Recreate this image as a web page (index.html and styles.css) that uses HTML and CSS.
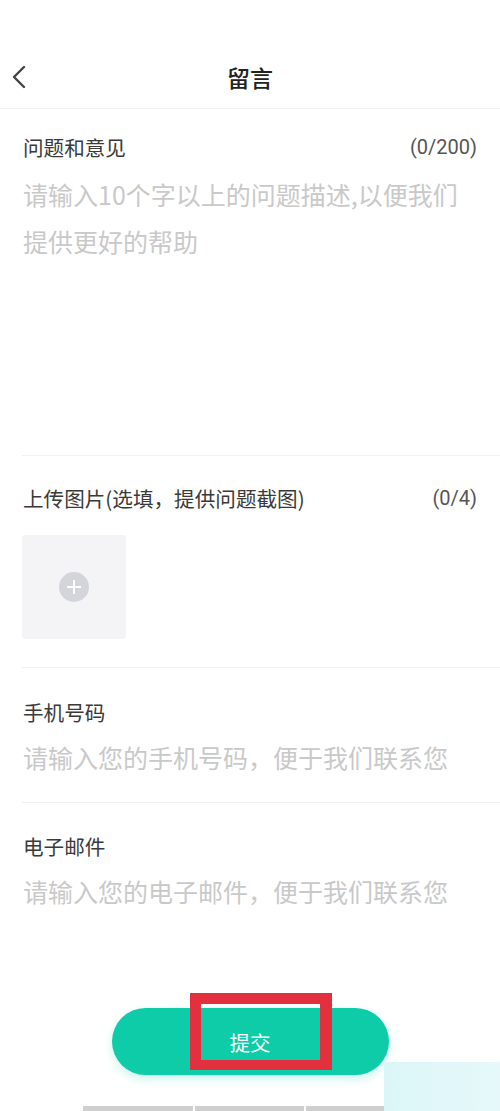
FILE: index.html
```html
<!DOCTYPE html>
<html lang="zh-CN">
<head>
<meta charset="utf-8">
<title>留言</title>
<link rel="stylesheet" href="styles.css">
</head>
<body>
<div class="page">
  <header class="header">
    <div class="header-row">
      <span class="back">
        <svg width="16" height="24" viewBox="0 0 16 24"><path d="M13 2 L3 12 L13 22" fill="none" stroke="#444" stroke-width="2.4" stroke-linecap="round" stroke-linejoin="round"/></svg>
      </span>
      <h1 class="title">留言</h1>
    </div>
  </header>

  <section class="section s-feedback">
    <div class="label-row"><span class="label">问题和意见</span><span class="count">(0/200)</span></div>
    <div class="placeholder area">请输入10个字以上的问题描述,以便我们提供更好的帮助</div>
  </section>

  <section class="section s-upload">
    <div class="label-row"><span class="label">上传图片(选填，提供问题截图)</span><span class="count">(0/4)</span></div>
    <div class="upload-box">
      <span class="plus"></span>
    </div>
  </section>

  <section class="section s-phone">
    <div class="label-row"><span class="label">手机号码</span></div>
    <div class="placeholder">请输入您的手机号码，便于我们联系您</div>
  </section>

  <section class="section s-email">
    <div class="label-row"><span class="label">电子邮件</span></div>
    <div class="placeholder">请输入您的电子邮件，便于我们联系您</div>
  </section>

  <div class="footer">
    <div class="btn-wrap">
      <button class="submit">提交</button>
      <span class="highlight"></span>
    </div>
  </div>

  <div class="bottom-bars">
    <span class="bar b1"></span><span class="bar b2"></span><span class="bar b3"></span>
  </div>
  <span class="cyan-block"></span>
</div>
</body>
</html>
```

FILE: styles.css
```css
html, body {
  margin: 0;
  padding: 0;
  height: 1111px;
  overflow: hidden;
  background: #fff;
}
body {
  font-family: "Noto Sans CJK SC", "Noto Sans", sans-serif;
  color: #333;
}
.page {
  position: relative;
  width: 500px;
  height: 1111px;
}
.header {
  height: 109px;
  box-sizing: border-box;
  padding-top: 54px;
  border-bottom: 1px solid #eeeeee;
}
.header-row {
  position: relative;
  height: 46px;
  display: flex;
  align-items: center;
  justify-content: center;
}
.back {
  position: absolute;
  left: 11px;
  top: 11px;
  width: 16px;
  height: 24px;
  display: flex;
}
.title {
  margin: 0;
  font-size: 23px;
  font-weight: 500;
  line-height: 46px;
  color: #222;
  letter-spacing: 0;
}
.section {
  margin-left: 22px;
  padding-right: 23px;
  border-bottom: 1px solid #f0f0f0;
}
.s-email { border-bottom: none; }
.label-row {
  display: flex;
  justify-content: space-between;
  align-items: center;
  height: 28px;
  padding-left: 1px;
}
.label {
  font-size: 20.6px;
  line-height: 28px;
  color: #3a3a3a;
}
.count {
  font-size: 20px;
  line-height: 28px;
  color: #555;
  font-family: "Roboto", "Noto Sans", sans-serif;
}
.placeholder {
  font-size: 25px;
  line-height: 47px;
  color: #c9c9c9;
  padding-left: 1px;
  margin-top: 8px;
  white-space: nowrap;
}
.s-feedback { padding-top: 24px; }
.s-feedback .placeholder {
  margin-top: 10px;
  height: 284px;
  white-space: normal;
}
.s-upload { padding-top: 28px; padding-bottom: 28px; }
.upload-box {
  margin-top: 23px;
  width: 104px;
  height: 104px;
  border-radius: 3px;
  background: #f4f4f6;
  display: flex;
  align-items: center;
  justify-content: center;
}
.plus {
  position: relative;
  width: 30px;
  height: 30px;
  border-radius: 50%;
  background: #d4d5da;
}
.plus::before, .plus::after {
  content: "";
  position: absolute;
  background: #fff;
  left: 50%;
  top: 50%;
  transform: translate(-50%, -50%);
}
.plus::before { width: 14px; height: 2px; }
.plus::after { width: 2px; height: 14px; }
.s-phone { padding-top: 30px; padding-bottom: 21px; }
.s-email { padding-top: 29px; padding-bottom: 0; }
.s-email .placeholder { height: 47px; }
.footer {
  margin-top: 93px;
  display: flex;
  justify-content: center;
}
.btn-wrap {
  position: relative;
}
.submit {
  display: block;
  width: 277px;
  height: 67px;
  border: none;
  border-radius: 34px;
  background: #0dcca7;
  color: #fff;
  font-family: "Noto Sans CJK SC", sans-serif;
  font-size: 20.5px;
  box-shadow: 0 4px 10px rgba(13, 204, 167, 0.22);
  padding: 0;
}
.highlight {
  position: absolute;
  left: 78px;
  top: -15px;
  width: 142px;
  height: 77px;
  box-sizing: border-box;
  border: 11px solid #e3303f;
  border-right-width: 12px;
  border-bottom-width: 10px;
}
.bottom-bars {
  margin-top: 31px;
  display: flex;
  padding-left: 83px;
  gap: 2px;
  height: 5px;
}
.bar { display: block; height: 5px; background: #cfcfcf; }
.b1 { width: 110px; }
.b2 { width: 109px; }
.b3 { width: 78px; }
.cyan-block {
  position: absolute;
  left: 384px;
  top: 1062px;
  width: 116px;
  height: 49px;
  background: linear-gradient(90deg, #dcf6f8, #e6f8fa);
}
```
